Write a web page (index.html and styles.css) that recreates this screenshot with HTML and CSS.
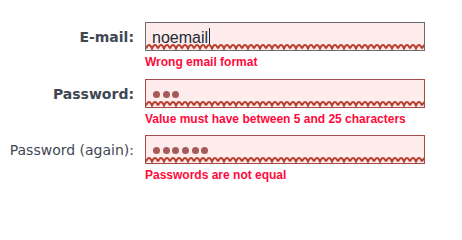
FILE: index.html
```html
<!DOCTYPE html>
<html>
<head>
<meta charset="utf-8">
<link rel="stylesheet" href="styles.css">
</head>
<body>
<form class="form">
  <div class="label strong">E-mail:</div>
  <div class="field">
    <div class="box box-gray"><span class="value">noemail</span><span class="caret"></span></div>
    <div class="error">Wrong email format</div>
  </div>

  <div class="label strong">Password:</div>
  <div class="field">
    <div class="box"><span class="dot"></span><span class="dot"></span><span class="dot"></span></div>
    <div class="error">Value must have between 5 and 25 characters</div>
  </div>

  <div class="label">Password (again):</div>
  <div class="field">
    <div class="box"><span class="dot"></span><span class="dot"></span><span class="dot"></span><span class="dot"></span><span class="dot"></span><span class="dot"></span></div>
    <div class="error">Passwords are not equal</div>
  </div>
</form>
</body>
</html>
```

FILE: styles.css
```css
html, body {
  margin: 0;
  padding: 0;
  background: #ffffff;
}

.form {
  display: grid;
  grid-template-columns: 134px 280px;
  column-gap: 11px;
  row-gap: 9.5px;
  padding-top: 22px;
  font-family: "DejaVu Sans", Verdana, sans-serif;
}

.label {
  text-align: right;
  font-size: 14px;
  color: #3f4753;
  height: 29px;
  line-height: 31px;
}

.label.strong {
  font-weight: bold;
}

.field {
  display: flex;
  flex-direction: column;
}

.box {
  box-sizing: border-box;
  height: 29px;
  border: 1px solid #a54b4b;
  background-color: #fdeceb;
  background-image: url("data:image/svg+xml;utf8,<svg xmlns='http://www.w3.org/2000/svg' width='12' height='8'><path d='M0 6.5 Q3 -0.5 6 6.5 Q9 -0.5 12 6.5' fill='none' stroke='%23b8402f' stroke-width='2'/></svg>");
  background-repeat: repeat-x;
  background-position: left bottom;
  background-size: 12px 8px;
  display: flex;
  align-items: flex-start;
  padding-left: 7px;
}

.box-gray {
  border-color: #6b6b6b;
  padding-left: 6px;
}

.value {
  font-family: "Liberation Sans", Arial, sans-serif;
  font-size: 16px;
  color: #1f2a36;
  line-height: 16px;
  margin-top: 7px;
}

.caret {
  width: 1px;
  height: 16px;
  background: #1f2a36;
  margin-top: 5px;
  margin-left: 1px;
}

.dot {
  width: 7px;
  height: 7px;
  border-radius: 50%;
  background: #a65959;
  margin-top: 11px;
  margin-right: 2.7px;
}

.error {
  margin-top: 5px;
  font-family: "Liberation Sans", Arial, sans-serif;
  font-size: 12px;
  line-height: 13px;
  font-weight: bold;
  color: #ff0a3c;
  white-space: nowrap;
}
```
